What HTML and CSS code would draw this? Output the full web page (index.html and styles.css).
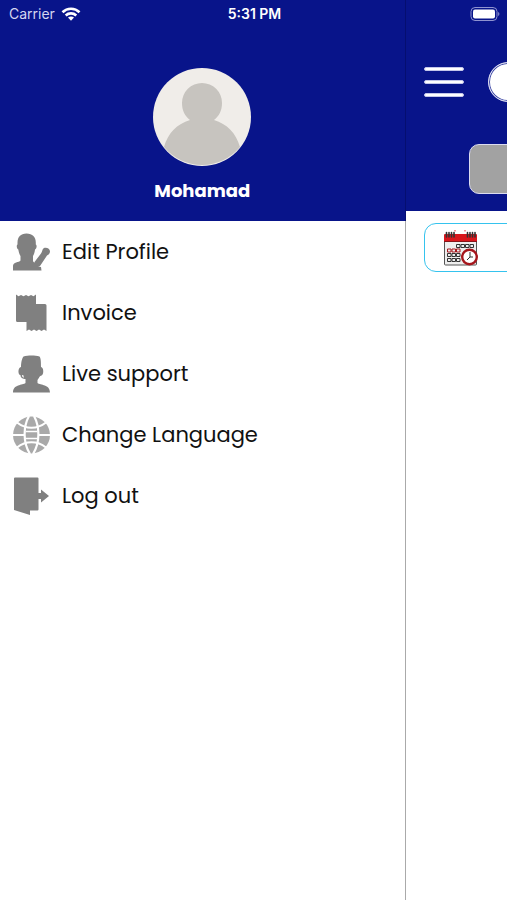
FILE: index.html
```html
<!DOCTYPE html>
<html lang="en">
<head>
    <meta charset="UTF-8">
    <meta name="viewport" content="width=device-width, initial-scale=1.0">
    <title>Menu</title>
    <link rel="stylesheet" href="styles.css">
</head>
<body>

<div class="status-bar">
    <div class="carrier">
        <span>Carrier</span>
        <svg width="20" height="14" viewBox="0 0 20 14" fill="none" stroke="#fff" stroke-width="2.6">
            <path d="M1.5 5.2C6.2.6 13.8.6 18.500 5.200"/>
            <path d="M4.700 8.500C7.700 5.700 12.300 5.700 15.300 8.500"/>
            <path d="M7 10.600C8.800 9 11.200 9 13 10.600L10 13.800z" fill="#fff" stroke="none"/>
        </svg>
    </div>
    <div class="time">5:31 PM</div>
    <svg class="battery" width="30" height="14" viewBox="0 0 30 14">
        <rect x="1" y="0.500" width="26" height="13" rx="4" fill="none" stroke="#8f93d0"/>
        <rect x="3" y="2.500" width="22" height="9" rx="2" fill="#fff"/>
        <path d="M28.200 5v4c1.600-.8 1.600-3.200 0-4z" fill="#8f93d0"/>
    </svg>
</div>

<div class="app">
    <aside class="drawer">
        <div class="profile">
            <svg class="avatar" viewBox="0 0 98 98">
                <circle cx="49" cy="49" r="49" fill="#f0ede9"/>
                <path d="M49 15a20 20 0 0 1 20 20c0 8-3 13-8 17 13 4 22 13 26 27A49 49 0 0 1 11 79c4-14 13-23 26-27-5-4-8-9-8-17a20 20 0 0 1 20-20z" fill="#c7c4bf"/>
            </svg>
            <h1>Mohamad</h1>
        </div>
        <nav class="menu">
            <a href="#profile">
                <svg viewBox="0 0 38 38" fill="#808080">
                    <path d="M14.500 .5C20.500 .5 23.800 4 23.800 9.500v2c1.500.5.800 4.500-.8 5-.3 3-1 5-2 6.500v5c.5 1.500 2 1.800 3.500 2L23 33l6 1 .5 3.500H1V33c0-4 6-3.500 7.500-5.500V23C7.500 21.500 6.800 19.500 6.300 16.500 4.700 16 4.200 12 5.500 11.500v-2C5.500 4 8.500 .5 14.500 .5z"/>
                    <path d="M29 20.500c1.500-2 1-4.500 3-5.500 3-1 6 1 6 3.500 0 1.500-1 3-3 4L28 33 23 35.500l-.5-6.500z"/>
                </svg>
                <span>Edit Profile</span>
            </a>
            <a href="#invoice">
                <svg viewBox="0 0 38 38" fill="#808080">
                    <path d="M4 .5l2.500 1.800L9 1l2.500 1.300L14 1l2.500 1.300L19 1l2.500 1.300L24 .5V10h9q1.500 0 1.500 1.500v25.500L32 35.500l-2.500 1.500-2.500-1.500-2.500 1.500-2.500-1.500-2.500 1.500-2.500-1.500-2.500 1.500V28H5.500Q4 28 4 26.500z"/>
                </svg>
                <span>Invoice</span>
            </a>
            <a href="#support">
                <svg viewBox="0 0 38 38" fill="#808080">
                    <path d="M11.500 1.500C16 .3 23 .3 27.500 1.500c1.500 1.500 1.500 6.500 1.500 10.500 3 .3 3 8.500 0 8.800-1 .2-1.500 1-2 2l-1.500 2.200v3c3 2.500 12.500 1 12.500 9.500H1c0-8.500 9.500-7 12.500-9.500v-4h-1c-2.500-.3-4-1.500-4-3.700-2.800-.3-2.800-8 .5-8.300 0-4 1-9 2.500-10.500z"/>
                    <path d="M10 20.300c0 1.500.6 2 2 2.400L11.200 20z" fill="#fff"/>
                </svg>
                <span>Live support</span>
            </a>
            <a href="#language">
                <svg viewBox="0 0 38 38">
                    <circle cx="19.500" cy="19" r="18.500" fill="#a9a9a9"/>
                    <g fill="none" stroke="#fff" stroke-width="2.200">
                        <path d="M5 6.500c9 7 20 7 29 0M5 31.500c9-7 20-7 29 0M0 19h13M26 19h13"/>
                        <path d="M17 0C11 11 11 27 18 38M22 0c6 11 6 27-1 38"/>
                        <path d="M14 15.500h11M14 22.500h11" stroke-width="1.400"/>
                    </g>
                </svg>
                <span>Change Language</span>
            </a>
            <a href="#logout">
                <svg viewBox="0 0 38 38" fill="#808080">
                    <path d="M2 1.500Q2 .5 3 .5h22.500q1 0 1 1V16H29v-3.500l8 6.500-8 6.500V22h-2.500v10.500q0 1-1 1H18V38L2 33z"/>
                </svg>
                <span>Log out</span>
            </a>
        </nav>
    </aside>

    <main class="page">
        <header class="page-header">
            <div class="toolbar">
                <button type="button" class="menu-button" aria-label="Menu">
                    <span></span>
                    <span></span>
                    <span></span>
                </button>
                <button type="button" class="round-button" aria-label="Account"></button>
            </div>
            <div class="banner"></div>
        </header>
        <a class="card" href="#appointments" aria-label="Appointments">
            <svg width="36" height="36" viewBox="0 0 36 36">
                <rect x="1.500" y="6" width="32" height="29" rx="1" fill="#eee" stroke="#555"/>
                <path d="M1 5q0-1 1-1h31q1 0 1 1v7H1z" fill="#d9161c"/>
                <path d="M1 11.500h33" stroke="#86151a"/>
                <path d="M3.500 7V2.500M6 7V2.500M8.500 7V2.500M11 7V2.500M24.500 7V2.500M27 7V2.500M29.500 7V2.500M32 7V2.500" stroke="#333" stroke-width="1.600" stroke-linecap="round"/>
                <path d="M12 0v1.500M22 0v1.500" stroke="#e8323a"/>
                <g fill="#eee" stroke="#333" stroke-width="1">
                    <path d="M13.500 14.500h3.500v3h-3.500zM18 14.500h3.500v3H18zM22.500 14.500H26v3h-3.500zM27 14.500h3.500v3H27z"/>
                    <path d="M4.500 23.500H8v3H4.500zM9 23.500h3.500v3H9zM13.500 23.500H17v3h-3.500z"/>
                    <path d="M4.500 28.500H8v3H4.500zM9 28.500h3.500v3H9zM13.500 28.500H17v3h-3.500z"/>
                    <path d="M4.500 19H8v3H4.500zM9 19h3.500v3H9zM13.500 19H17v3h-3.500z" stroke="#a5161c"/>
                </g>
                <circle cx="26.500" cy="27" r="7.300" fill="#fff" stroke="#a5161c" stroke-width="2.400"/>
                <path d="M27 22v5l-3 3M27 27h3" fill="none" stroke="#333"/>
            </svg>
        </a>
    </main>
</div>

</body>
</html>
```
FILE: styles.css
```css
* {
    box-sizing: border-box;
}
body {
    margin: 0;
    font-family: Poppins, Inter, sans-serif;
    background-color: #fff;
    color: #111;
}
.status-bar {
    position: absolute;
    top: 0;
    left: 0;
    right: 0;
    z-index: 2;
    display: grid;
    grid-template-columns: 1fr auto 1fr;
    align-items: center;
    height: 27px;
    padding: 0 7px 0 9px;
    color: #fff;
    font-family: Inter, sans-serif;
    font-size: 14px;
}
.carrier {
    display: flex;
    align-items: center;
    gap: 6px;
    color: #d5d6f0;
}
.time {
    font-weight: 600;
}
.battery {
    justify-self: end;
}
.app {
    display: flex;
    min-height: 100vh;
    overflow: hidden;
}
.drawer {
    flex: 0 0 80%;
    border-right: 1px solid #aaa;
}
.profile {
    display: flex;
    flex-direction: column;
    align-items: center;
    gap: 12px;
    padding: 68px 0 17px;
    background-color: #08148a;
    /* covers the drawer edge */
    margin-right: -1px;
    border-right: 1px solid #050e70;
}
.avatar {
    width: 98px;
    height: 98px;
}
.profile h1 {
    margin: 0;
    color: #fff;
    font-size: 18px;
    line-height: 26px;
    font-weight: 700;
}
.menu a {
    display: flex;
    align-items: center;
    gap: 12px;
    height: 61px;
    padding-left: 12px;
    color: #111;
    font-size: 21px;
    text-decoration: none;
}
.menu svg {
    width: 38px;
    height: 38px;
}
/* the page keeps its full width and is pushed aside by the drawer */
.page {
    flex: 0 0 100%;
}
.page-header {
    padding: 62px 18px 17px;
    background-color: #08148a;
}
.toolbar {
    display: flex;
    align-items: center;
    gap: 24px;
}
.menu-button {
    display: flex;
    flex-direction: column;
    gap: 9px;
    width: 40px;
    padding: 0;
    background: none;
    border: none;
    cursor: pointer;
}
.menu-button span {
    height: 4px;
    background-color: #fff;
    border: 1px solid #c3c6ea;
    border-radius: 2px;
}
.round-button {
    width: 40px;
    height: 40px;
    padding: 0;
    background-color: #fff;
    border: 1px solid #dcdcf0;
    border-radius: 50%;
    box-shadow: inset 0 0 0 1px #3a45a5;
    cursor: pointer;
}
.banner {
    height: 50px;
    margin: 42px 45px 0;
    background-color: #a2a2a2;
    border: 1px solid #dcdcf0;
    border-radius: 10px;
}
.card {
    display: flex;
    align-items: center;
    height: 49px;
    margin: 12px 18px;
    padding-left: 18px;
    border: 1px solid #35c3ee;
    border-radius: 12px;
}
```
